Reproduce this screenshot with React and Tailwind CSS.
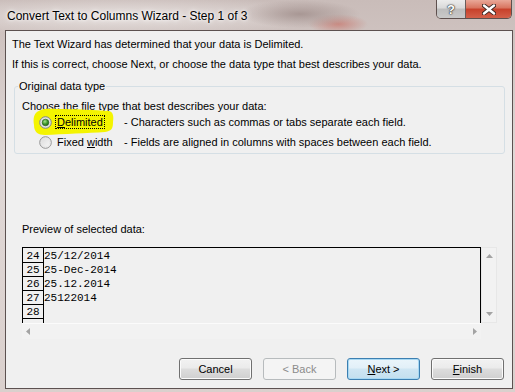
import React from "react";

const sans = { fontFamily: '"Liberation Sans", Arial, sans-serif' };

function RadioOn() {
  return (
    <svg width="13" height="13" viewBox="0 0 13 13" className="shrink-0">
      <defs>
        <radialGradient id="rgOnBg" cx="50%" cy="50%" r="60%">
          <stop offset="0%" stopColor="#f4f4f4" />
          <stop offset="100%" stopColor="#d4d4d4" />
        </radialGradient>
        <radialGradient id="rgOnDot" cx="40%" cy="35%" r="70%">
          <stop offset="0%" stopColor="#a6e08a" />
          <stop offset="55%" stopColor="#3f9a2c" />
          <stop offset="100%" stopColor="#1c5e16" />
        </radialGradient>
      </defs>
      <circle cx="6.5" cy="6.5" r="5.8" fill="url(#rgOnBg)" stroke="#7f8a86" strokeWidth="1" />
      <circle cx="6.5" cy="6.5" r="3.3" fill="url(#rgOnDot)" stroke="#1f5a1a" strokeWidth="0.6" />
    </svg>
  );
}

function RadioOff() {
  return (
    <svg width="13" height="13" viewBox="0 0 13 13" className="shrink-0">
      <defs>
        <linearGradient id="rgOff" x1="0" y1="0" x2="1" y2="1">
          <stop offset="0%" stopColor="#d8d8d8" />
          <stop offset="100%" stopColor="#fbfbfb" />
        </linearGradient>
      </defs>
      <circle cx="6.5" cy="6.5" r="5.8" fill="url(#rgOff)" stroke="#949494" strokeWidth="1" />
      <circle cx="6.5" cy="6.5" r="4.2" fill="none" stroke="#e6e6e6" strokeWidth="0.8" />
    </svg>
  );
}

function Tri({ dir }) {
  const pts = {
    up: "0,4 3.5,0 7,4",
    down: "0,0 3.5,4 7,0",
    left: "4,0 0,3.5 4,7",
    right: "0,0 4,3.5 0,7",
  }[dir];
  const w = dir === "up" || dir === "down" ? 7 : 4;
  const h = dir === "up" || dir === "down" ? 4 : 7;
  return (
    <svg width={w} height={h} viewBox={`0 0 ${w} ${h}`}>
      <polygon points={pts} fill="#a3a3a3" />
    </svg>
  );
}

function Btn({ children, kind }) {
  const base =
    "w-[73px] h-[22px] rounded-[3px] border flex items-center justify-center text-[11px] leading-none";
  if (kind === "disabled")
    return (
      <div className={`${base} border-[#b7bbbd] bg-[#f4f4f4] text-[#8b8b8b]`}>{children}</div>
    );
  if (kind === "default")
    return (
      <div
        className={`${base} border-[#3c7fb1] text-black bg-[linear-gradient(#eaf5fb_0%,#e2f0f8_45%,#cfe6f3_50%,#c3dfee_100%)] shadow-[inset_0_0_0_1px_#a7d8f3]`}
      >
        {children}
      </div>
    );
  return (
    <div
      className={`${base} border-[#707070] text-black bg-[linear-gradient(#f2f2f2_0%,#ebebeb_45%,#dddddd_50%,#cfcfcf_100%)] shadow-[inset_0_0_0_1px_#fbfbfb]`}
    >
      {children}
    </div>
  );
}

export default function App() {
  const rows = [
    ["24", "25/12/2014"],
    ["25", "25-Dec-2014"],
    ["26", "25.12.2014"],
    ["27", "25122014"],
    ["28", ""],
  ];
  return (
    <div
      className="w-[515px] h-[392px] flex flex-col overflow-hidden bg-[#c9bab7] bg-[radial-gradient(ellipse_60px_14px_at_300px_14px,#a89794,transparent),radial-gradient(ellipse_30px_10px_at_338px_24px,#c98a82,transparent),radial-gradient(ellipse_220px_20px_at_120px_16px,#e8e2e0,transparent),linear-gradient(#c9bcb9,#e0d8d6_40%,#dad0cd)]"
      style={sans}
    >
      {/* title bar */}
      <div className="h-[30px] flex items-start shrink-0">
        <div className="pl-[7px] pt-[8px] text-[12px] leading-[16px] text-black [text-shadow:0_0_6px_#ffffff,0_0_3px_#ffffff]">
          Convert Text to Columns Wizard - Step 1 of 3
        </div>
        <div className="ml-auto mr-[3px] flex border border-t-0 border-[#5e504e] rounded-b-[5px] overflow-hidden">
          <div className="w-[29px] h-[18px] flex items-center justify-center border-r border-[#6a5c5a] bg-[linear-gradient(#ececec_0%,#d9d9d9_45%,#bdbdbd_50%,#c9c9c9_100%)]">
            <span className="text-white font-bold text-[13px] leading-none [text-shadow:0_0_1px_#333,0_0_1px_#333,0_0_2px_#333]">?</span>
          </div>
          <div className="w-[45px] h-[18px] flex items-center justify-center bg-[linear-gradient(#e9a898_0%,#d8735e_45%,#c7402a_50%,#d3604a_100%)]">
            <svg width="14" height="11" viewBox="0 0 14 11">
              <path d="M2 1.5 L12 9.5 M12 1.5 L2 9.5" stroke="#3a2420" strokeWidth="4.2" strokeLinecap="round" />
              <path d="M2 1.5 L12 9.5 M12 1.5 L2 9.5" stroke="#ffffff" strokeWidth="2.4" strokeLinecap="round" />
            </svg>
          </div>
        </div>
      </div>

      {/* client area */}
      <div className="ml-[5px] w-[508px] h-[359px] border border-[#5c5150] bg-[#f0f0f0] flex flex-col text-[11px] text-black shrink-0">
        <div className="pt-[3px] pl-[6px] leading-[20px]">
          <div>The Text Wizard has determined that your data is Delimited.</div>
          <div>If this is correct, choose Next, or choose the data type that best describes your data.</div>
        </div>

        <fieldset className="mt-[5px] ml-[8px] mr-[7px] border border-[#d5dfe5] rounded-[3px] px-[7px] pb-[3px]">
          <legend className="ml-[-4px] px-[1px] leading-[14px]">Original data type</legend>
          <div className="pt-[5px] leading-[16px]">Choose the file type that best describes your data:</div>
          <div className="relative h-[16px] flex items-center">
            <svg
              className="absolute left-[11px] top-[-6px]"
              width="82"
              height="28"
              viewBox="0 0 82 28"
            >
              <path
                d="M3 5 C6 1 14 0 24 1 C42 1 62 2 76 3 C80 4 81 8 80 14 C80 20 79 23 72 24 C55 25 30 26 12 27 C5 27 1 24 1 17 C0 11 1 7 3 5 Z"
                fill="#f4f400"
              />
            </svg>
            <div className="relative flex items-center w-[102px] shrink-0 pl-[17px] whitespace-nowrap">
              <RadioOn />
              <span className="ml-[3px] px-[1px] border border-dotted border-black leading-[12px]">
                <span className="underline">D</span>elimited
              </span>
            </div>
            <span className="relative whitespace-nowrap">- Characters such as commas or tabs separate each field.</span>
          </div>
          <div className="mt-[4px] h-[16px] flex items-center">
            <div className="flex items-center w-[102px] shrink-0 pl-[17px] whitespace-nowrap">
              <RadioOff />
              <span className="ml-[3px] px-[1px] border border-transparent leading-[12px]">
                Fixed <span className="underline">w</span>idth
              </span>
            </div>
            <span className="whitespace-nowrap">- Fields are aligned in columns with spaces between each field.</span>
          </div>
        </fieldset>

        <div className="mt-[67px] pl-[16px] leading-[16px]">Preview of selected data:</div>

        <div className="mt-[10px] ml-[16px] flex">
          <div className="w-[459px] flex flex-col">
            <div
              className="h-[76px] border-l border-t border-r border-black flex overflow-hidden"
              style={{ fontFamily: '"Liberation Mono", "Courier New", monospace' }}
            >
              <div className="w-[21px] border-r border-black pt-[1px] shrink-0">
                {rows.map(([n]) => (
                  <div key={n} className="h-[14px] border-b border-black text-center pt-[2px] leading-[11px] text-[11px]">
                    {n}
                  </div>
                ))}
              </div>
              <div className="pt-[1px]">
                {rows.map(([n, d]) => (
                  <div key={n} className="h-[14px] pt-[2px] leading-[11px] text-[11px] whitespace-pre">
                    {d}
                  </div>
                ))}
              </div>
            </div>
            <div className="h-[16px] bg-[#f2f2f2] border-t border-[#fbfbfb] flex items-center justify-between px-[4px]">
              <Tri dir="left" />
              <Tri dir="right" />
            </div>
          </div>
          <div className="w-[16px] h-[76px] bg-[#f2f2f2] border border-[#e7e7e7] flex flex-col items-center justify-between py-[6px]">
            <Tri dir="up" />
            <Tri dir="down" />
          </div>
        </div>

        <div className="mt-[19px] mr-[8px] flex justify-end gap-[11px]">
          <Btn>Cancel</Btn>
          <Btn kind="disabled">&lt; Back</Btn>
          <Btn kind="default">
            <span>
              <span className="underline">N</span>ext &gt;
            </span>
          </Btn>
          <Btn>
            <span>
              <span className="underline">F</span>inish
            </span>
          </Btn>
        </div>
      </div>
    </div>
  );
}
